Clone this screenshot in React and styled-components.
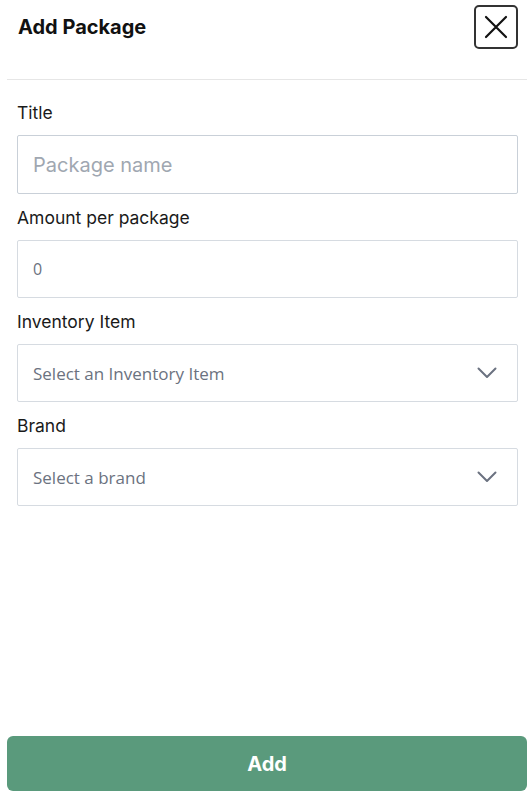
import React from "react";
import styled, { createGlobalStyle } from "styled-components";

const GlobalStyle = createGlobalStyle`
  html, body {
    margin: 0;
    padding: 0;
    background: #ffffff;
  }
  body {
    font-family: Inter, "Noto Sans", sans-serif;
    color: #111111;
  }
  * {
    box-sizing: border-box;
  }
`;

const Panel = styled.div`
  display: flex;
  flex-direction: column;
  min-height: 100vh;
  padding: 0 5px 4px 7px;
`;

const Header = styled.div`
  display: flex;
  justify-content: space-between;
  align-items: flex-start;
  padding: 5px 9px 30px 11px;
  border-bottom: 1px solid #e6e6e6;
`;

const Title = styled.h1`
  margin: 0;
  font-size: 20px;
  font-weight: 700;
  line-height: 44px;
  color: #111111;
`;

const CloseButton = styled.button`
  width: 44px;
  height: 44px;
  padding: 0;
  display: flex;
  align-items: center;
  justify-content: center;
  background: #ffffff;
  border: 2px solid #333333;
  border-radius: 5px;
  cursor: pointer;
`;

const Form = styled.div`
  display: flex;
  flex-direction: column;
  padding: 21px 9px 0 10px;
  flex: 1;
`;

const Label = styled.label`
  display: block;
  font-size: 17.5px;
  line-height: 24px;
  color: #1a1a1a;
  margin: ${(p) => (p.first ? "0" : "12px")} 0 10px;
`;

const TextInput = styled.input`
  width: 100%;
  height: ${(p) => (p.big ? "59px" : "58px")};
  padding: 0 15px;
  border: 1px solid ${(p) => (p.big ? "#c9d0d8" : "#d6dbe1")};
  border-radius: 2px;
  font-family: ${(p) => (p.big ? 'Inter, sans-serif' : '"Open Sans", sans-serif')};
  font-size: ${(p) => (p.big ? "20px" : "16px")};
  color: #6b7280;
  outline: none;
  &::placeholder {
    color: #a0a7b1;
  }
`;

const SelectBox = styled.div`
  height: 58px;
  display: flex;
  align-items: center;
  justify-content: space-between;
  padding: 0 20px 0 15px;
  border: 1px solid #d6dbe1;
  border-radius: 2px;
  font-family: "Open Sans", sans-serif;
  font-size: 17px;
  color: #6b7280;
`;

const AddButton = styled.button`
  height: 55px;
  width: 100%;
  border: none;
  border-radius: 6px;
  background: #5a9a7c;
  color: #ffffff;
  font-family: Inter, sans-serif;
  font-size: 20px;
  font-weight: 700;
  cursor: pointer;
`;

const Chevron = () => (
  <svg width="20" height="12" viewBox="0 0 20 12" fill="none">
    <path d="M1.5 1.5 L10 10 L18.5 1.5" stroke="#6b7280" strokeWidth="2" strokeLinecap="round" strokeLinejoin="round" />
  </svg>
);

const XIcon = () => (
  <svg width="24" height="24" viewBox="0 0 24 24" fill="none">
    <path d="M2 2 L22 22 M22 2 L2 22" stroke="#111111" strokeWidth="2.2" strokeLinecap="round" />
  </svg>
);

export default function App() {
  return (
    <Panel>
      <GlobalStyle />
      <Header>
        <Title>Add Package</Title>
        <CloseButton aria-label="Close">
          <XIcon />
        </CloseButton>
      </Header>
      <Form>
        <Label first>Title</Label>
        <TextInput big placeholder="Package name" />
        <Label>Amount per package</Label>
        <TextInput defaultValue="0" />
        <Label>Inventory Item</Label>
        <SelectBox>
          <span>Select an Inventory Item</span>
          <Chevron />
        </SelectBox>
        <Label>Brand</Label>
        <SelectBox>
          <span>Select a brand</span>
          <Chevron />
        </SelectBox>
      </Form>
      <AddButton>Add</AddButton>
    </Panel>
  );
}
